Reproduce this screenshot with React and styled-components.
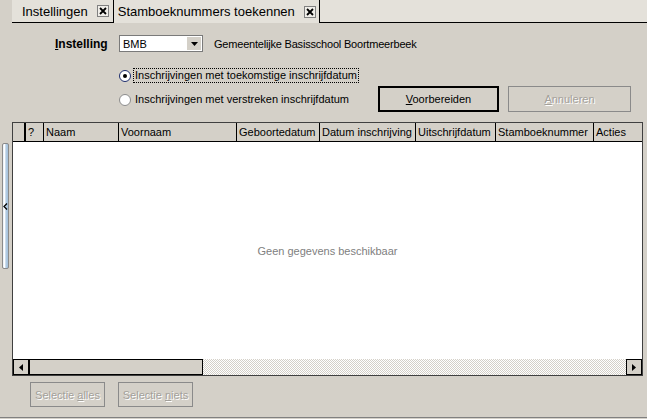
import React from 'react';
import styled, { createGlobalStyle } from 'styled-components';

const GlobalStyle = createGlobalStyle`
    html, body {
        margin: 0;
        padding: 0;
        background: #d4d0c8;
    }
    body {
        font-family: "Liberation Sans", Arial, sans-serif;
        font-size: 11px;
        color: #000;
    }
`;

const Window = styled.div`
    width: 647px;
    height: 418px;
    box-sizing: border-box;
    background: #d4d0c8;
    border-bottom: 1px solid #808080;
    display: flex;
    flex-direction: column;
    overflow: hidden;
`;

const TabBar = styled.div`
    display: flex;
    height: 23px;
    padding-left: 12px;
`;

const Tab = styled.div`
    display: flex;
    align-items: center;
    gap: 9px;
    box-sizing: border-box;
    height: 23px;
    font-size: 13px;
    background: #e4e1da;
    padding: ${p => (p.$active ? '0 3px 0 4px' : '0 4px 0 10px')};
    border-left: ${p => (p.$active ? '1px solid #000' : 'none')};
    border-right: ${p => (p.$active ? '1px solid #000' : 'none')};
    border-bottom: ${p => (p.$active ? 'none' : '1px solid #000')};
`;

const TabFiller = styled.div`
    flex: 1;
    background: #e4e1da;
    border-bottom: 1px solid #000;
`;

const CloseBox = styled.span`
    display: flex;
    align-items: center;
    justify-content: center;
    width: 12px;
    height: 12px;
    box-sizing: border-box;
    border: 1px solid #808080;
    background: #f0eee9;
`;

const SettingRow = styled.div`
    display: flex;
    align-items: center;
    height: 17px;
    margin-top: 12px;
    padding-left: 55px;
`;

const FieldLabel = styled.div`
    width: 64px;
    font-size: 12px;
    font-weight: bold;
`;

const Select = styled.div`
    display: flex;
    align-items: center;
    justify-content: space-between;
    width: 84px;
    height: 17px;
    box-sizing: border-box;
    border: 1px solid #7a7a7a;
    background: #fff;
    padding: 0 1px 0 3px;
`;

const DropButton = styled.span`
    display: flex;
    align-items: center;
    justify-content: center;
    width: 14px;
    height: 13px;
    background: #d4d0c8;
`;

const SchoolName = styled.div`
    margin-left: 11px;
    letter-spacing: -0.2px;
`;

const OptionSection = styled.div`
    display: flex;
    margin-top: 16px;
`;

const RadioGroup = styled.div`
    display: flex;
    flex-direction: column;
    gap: 9px;
    width: 259px;
    padding-left: 119px;
`;

const RadioRow = styled.div`
    display: flex;
    align-items: center;
    gap: 3px;
    height: 15px;
    white-space: nowrap;
`;

const RadioCircle = styled.span`
    display: flex;
    align-items: center;
    justify-content: center;
    width: 12px;
    height: 12px;
    box-sizing: border-box;
    border-radius: 50%;
    background: #fff;
    border: 1px solid ${p => (p.$focus ? '#1c2c6c' : '#8c8c8c')};
    &::after {
        content: '';
        display: ${p => (p.$checked ? 'block' : 'none')};
        width: 4px;
        height: 4px;
        border-radius: 50%;
        background: #000;
    }
`;

const RadioText = styled.span`
    padding: 0 1px;
    line-height: 13px;
    outline: ${p => (p.$focus ? '1px dotted #000' : 'none')};
`;

const ButtonGroup = styled.div`
    display: flex;
    gap: 9px;
    margin-top: 18px;
`;

const Button = styled.div`
    display: flex;
    align-items: center;
    justify-content: center;
    box-sizing: border-box;
    width: ${p => p.$width}px;
    height: ${p => p.$height || 26}px;
    background: #d4d0c8;
    border: ${p => (p.$default ? '2px solid #000' : '1px solid #8a8a8a')};
    color: ${p => (p.$disabled ? '#a3a09a' : '#000')};
    text-shadow: ${p => (p.$disabled ? '1px 1px 0 #fff' : 'none')};
`;

const TableArea = styled.div`
    display: flex;
    margin-top: 10px;
`;

const SideColumn = styled.div`
    width: 12px;
    flex: none;
`;

const CollapseHandle = styled.div`
    display: flex;
    align-items: center;
    justify-content: center;
    width: 7px;
    height: 126px;
    margin: 21px 0 0 2px;
    box-sizing: border-box;
    border: 1px solid #8a8a8a;
    border-radius: 2px;
    background: linear-gradient(90deg, #e6eef6 0%, #fff 30%, #b4cde4 60%, #a6c2dc 100%);
`;

const Table = styled.div`
    display: flex;
    flex-direction: column;
    width: 631px;
    height: 254px;
    box-sizing: border-box;
    border: 1px solid #404040;
    background: #fff;
`;

const HeaderRow = styled.div`
    display: flex;
    height: 19px;
    box-sizing: border-box;
    background: #d4d0c8;
    border-bottom: 1px solid #000;
`;

const HeaderCell = styled.div`
    display: flex;
    align-items: center;
    box-sizing: border-box;
    width: ${p => (p.$width ? `${p.$width}px` : 'auto')};
    flex: ${p => (p.$width ? 'none' : '1')};
    padding-left: 2px;
    border-right: ${p => (p.$width ? `${p.$thick ? 2 : 1}px solid #000` : 'none')};
    white-space: nowrap;
    overflow: hidden;
`;

const TableBody = styled.div`
    flex: 1;
    display: flex;
    align-items: center;
    justify-content: center;
    color: #808080;
`;

const ScrollBar = styled.div`
    display: flex;
    height: 16px;
`;

const ScrollButton = styled.div`
    display: flex;
    align-items: center;
    justify-content: center;
    width: 16px;
    box-sizing: border-box;
    border: 1px solid #000;
    background: #d4d0c8;
`;

const ScrollThumb = styled.div`
    width: 174px;
    box-sizing: border-box;
    border: 1px solid #000;
    border-left-width: 1px;
    background: #d4d0c8;
`;

const ScrollTrack = styled.div`
    flex: 1;
    background: repeating-conic-gradient(#fff 0 25%, #d4d0c8 0 50%) 0 0 / 2px 2px;
`;

const Footer = styled.div`
    display: flex;
    gap: 13px;
    margin-top: 6px;
    padding-left: 30px;
`;

const Arrow = ({ dir }) => {
    const points = {
        down: '0,0 7,0 3.5,4',
        left: '4,0 4,7 0,3.5',
        right: '0,0 0,7 4,3.5',
        chevron: '',
    }[dir];
    const w = dir === 'down' ? 7 : 4;
    const h = dir === 'down' ? 4 : 7;
    return (
        <svg width={w} height={h} viewBox={`0 0 ${w} ${h}`}>
            <polygon points={points} fill="#000" />
        </svg>
    );
};

const CloseIcon = () => (
    <CloseBox>
        <svg width="8" height="8" viewBox="0 0 8 8">
            <path d="M1 1 L7 7 M7 1 L1 7" stroke="#000" strokeWidth="1.8" />
        </svg>
    </CloseBox>
);

const columns = [
    { label: '', width: 13, thick: true },
    { label: '?', width: 18 },
    { label: 'Naam', width: 75 },
    { label: 'Voornaam', width: 118 },
    { label: 'Geboortedatum', width: 83 },
    { label: 'Datum inschrijving', width: 96 },
    { label: 'Uitschrijfdatum', width: 80 },
    { label: 'Stamboeknummer', width: 98 },
    { label: 'Acties' },
];

export default function App() {
    return (
        <Window>
            <GlobalStyle />
            <TabBar>
                <Tab>
                    <span>Instellingen</span>
                    <CloseIcon />
                </Tab>
                <Tab $active>
                    <span>Stamboeknummers toekennen</span>
                    <CloseIcon />
                </Tab>
                <TabFiller />
            </TabBar>

            <SettingRow>
                <FieldLabel><u>I</u>nstelling</FieldLabel>
                <Select>
                    <span>BMB</span>
                    <DropButton><Arrow dir="down" /></DropButton>
                </Select>
                <SchoolName>Gemeentelijke Basisschool Boortmeerbeek</SchoolName>
            </SettingRow>

            <OptionSection>
                <RadioGroup>
                    <RadioRow>
                        <RadioCircle $checked $focus />
                        <RadioText $focus>Inschrijvingen met toekomstige inschrijfdatum</RadioText>
                    </RadioRow>
                    <RadioRow>
                        <RadioCircle />
                        <RadioText>Inschrijvingen met verstreken inschrijfdatum</RadioText>
                    </RadioRow>
                </RadioGroup>
                <ButtonGroup>
                    <Button $width={121} $default><span><u>V</u>oorbereiden</span></Button>
                    <Button $width={123} $disabled><span><u>A</u>nnuleren</span></Button>
                </ButtonGroup>
            </OptionSection>

            <TableArea>
                <SideColumn>
                    <CollapseHandle>
                        <svg width="5" height="7" viewBox="0 0 5 7">
                            <path d="M4 0.5 L1 3.5 L4 6.5" stroke="#000" strokeWidth="1.3" fill="none" />
                        </svg>
                    </CollapseHandle>
                </SideColumn>
                <Table>
                    <HeaderRow>
                        {columns.map((col, i) => (
                            <HeaderCell key={i} $width={col.width} $thick={col.thick}>
                                {col.label}
                            </HeaderCell>
                        ))}
                    </HeaderRow>
                    <TableBody>Geen gegevens beschikbaar</TableBody>
                    <ScrollBar>
                        <ScrollButton><Arrow dir="left" /></ScrollButton>
                        <ScrollThumb />
                        <ScrollTrack />
                        <ScrollButton><Arrow dir="right" /></ScrollButton>
                    </ScrollBar>
                </Table>
            </TableArea>

            <Footer>
                <Button $width={75} $height={25} $disabled><span>Selectie <u>a</u>lles</span></Button>
                <Button $width={75} $height={25} $disabled><span>Selectie <u>n</u>iets</span></Button>
            </Footer>
        </Window>
    );
}
